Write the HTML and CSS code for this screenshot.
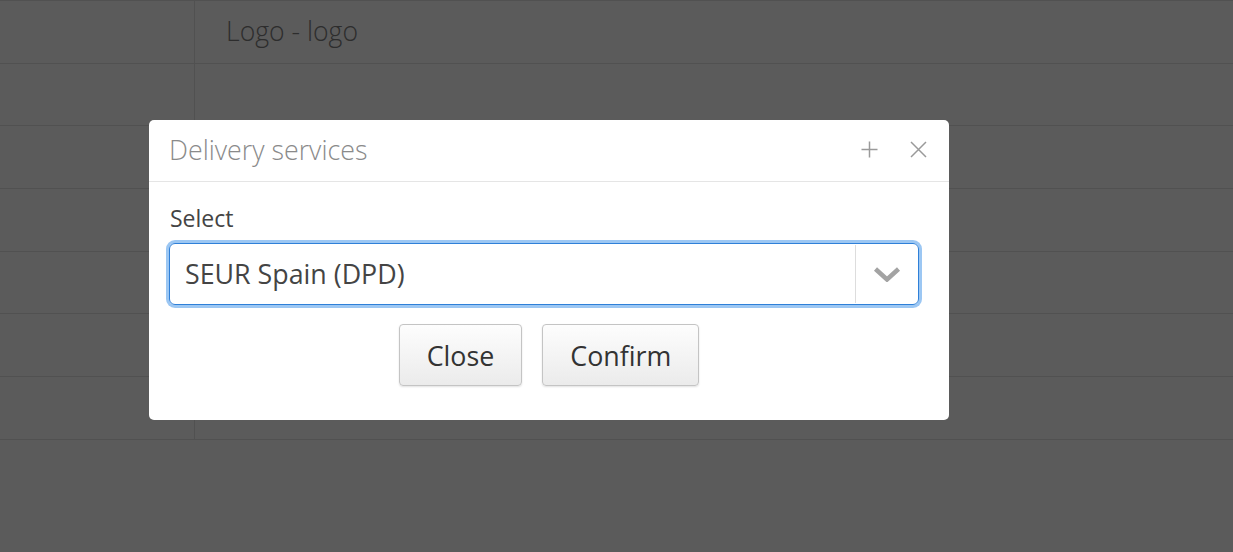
FILE: index.html
```html
<!DOCTYPE html>
<html>
<head>
<meta charset="utf-8">
<link rel="stylesheet" href="styles.css">
</head>
<body>
<div class="grid">
  <div class="row"><div class="cell first"></div><div class="cell main">Logo - logo</div></div>
  <div class="row"><div class="cell first"></div><div class="cell main"></div></div>
  <div class="row"><div class="cell first"></div><div class="cell main"></div></div>
  <div class="row"><div class="cell first"></div><div class="cell main"></div></div>
  <div class="row"><div class="cell first"></div><div class="cell main"></div></div>
  <div class="row"><div class="cell first"></div><div class="cell main"></div></div>
  <div class="row last"><div class="cell first"></div><div class="cell main"></div></div>
</div>
<div class="overlay"></div>
<div class="modal">
  <div class="modal-header">
    <div class="modal-title">Delivery services</div>
    <div class="modal-tools">
      <svg class="tool" width="17" height="17" viewBox="0 0 17 17"><path d="M8.5 0.5v16M0.5 8.5h16" stroke="#9a9a9a" stroke-width="1.5" fill="none"/></svg>
      <svg class="tool" width="17" height="17" viewBox="0 0 17 17"><path d="M1 1l15 15M16 1L1 16" stroke="#9a9a9a" stroke-width="1.5" fill="none"/></svg>
    </div>
  </div>
  <div class="modal-body">
    <div class="label">Select</div>
    <div class="select">
      <div class="select-value">SEUR Spain (DPD)</div>
      <div class="select-arrow">
        <svg width="28" height="16" viewBox="0 0 28 16"><path d="M2.5 3l11.5 10.5 11.5-10.5" stroke="#a3a3a3" stroke-width="4.5" fill="none" stroke-linejoin="miter"/></svg>
      </div>
    </div>
    <div class="actions">
      <button class="btn">Close</button>
      <button class="btn">Confirm</button>
    </div>
  </div>
</div>
</body>
</html>
```

FILE: styles.css
```css
html, body {
  margin: 0;
  padding: 0;
  width: 1233px;
  height: 552px;
  overflow: hidden;
  background: #ffffff;
  font-family: "Open Sans", "Liberation Sans", sans-serif;
}

.grid {
  display: flex;
  flex-direction: column;
  border-top: 1px solid #e4e4e4;
}

.row {
  display: flex;
  height: 61.7px;
  border-bottom: 1px solid #e4e4e4;
}

.cell.first {
  width: 194px;
  border-right: 1px solid #e4e4e4;
  flex: none;
}

.cell.main {
  flex: 1;
  padding-left: 31px;
  font-size: 26.6px;
  font-weight: 300;
  line-height: 61px;
  color: #7e7e7e;
}

.overlay {
  position: fixed;
  inset: 0;
  background: rgba(0, 0, 0, 0.645);
}

.modal {
  position: absolute;
  left: 149px;
  top: 120px;
  width: 800px;
  background: #ffffff;
  border-radius: 5px;
}

.modal-header {
  display: flex;
  align-items: center;
  justify-content: space-between;
  height: 61px;
  padding: 0 22px 0 20px;
  border-bottom: 1px solid #e5e5e5;
}

.modal-title {
  font-size: 26.8px;
  font-weight: 300;
  color: #8a8a8a;
  line-height: 60px;
  margin-top: -2px;
}

.modal-tools {
  display: flex;
  gap: 32px;
  align-items: center;
  margin-top: -2px;
}

.tool {
  display: block;
}

.modal-body {
  padding: 21px 20px 34px 20px;
}

.label {
  font-size: 23px;
  line-height: 31px;
  color: #444444;
  padding-left: 1px;
}

.select {
  margin-top: 9px;
  margin-right: 10px;
  height: 60px;
  border: 1px solid #2f80d8;
  border-radius: 6px;
  box-shadow: 0 0 0 3px #9cc7f3;
  display: flex;
  align-items: stretch;
}

.select-value {
  flex: 1;
  font-size: 26.8px;
  line-height: 60px;
  padding-left: 15px;
  color: #444444;
}

.select-arrow {
  width: 62px;
  border-left: 1px solid #dddddd;
  margin: 1px 0;
  display: flex;
  align-items: center;
  justify-content: center;
}

.select-arrow svg {
  display: block;
  margin-left: 0;
}

.actions {
  display: flex;
  justify-content: center;
  gap: 20px;
  margin-top: 19px;
}

.btn {
  height: 62px;
  padding: 0 27px;
  font-family: "Open Sans", "Liberation Sans", sans-serif;
  font-size: 26.8px;
  color: #333333;
  background: linear-gradient(#fdfdfd, #ebebeb);
  border: 1px solid #c4c4c4;
  border-radius: 4px;
  box-shadow: 0 1px 2px rgba(0, 0, 0, 0.12);
}
```
